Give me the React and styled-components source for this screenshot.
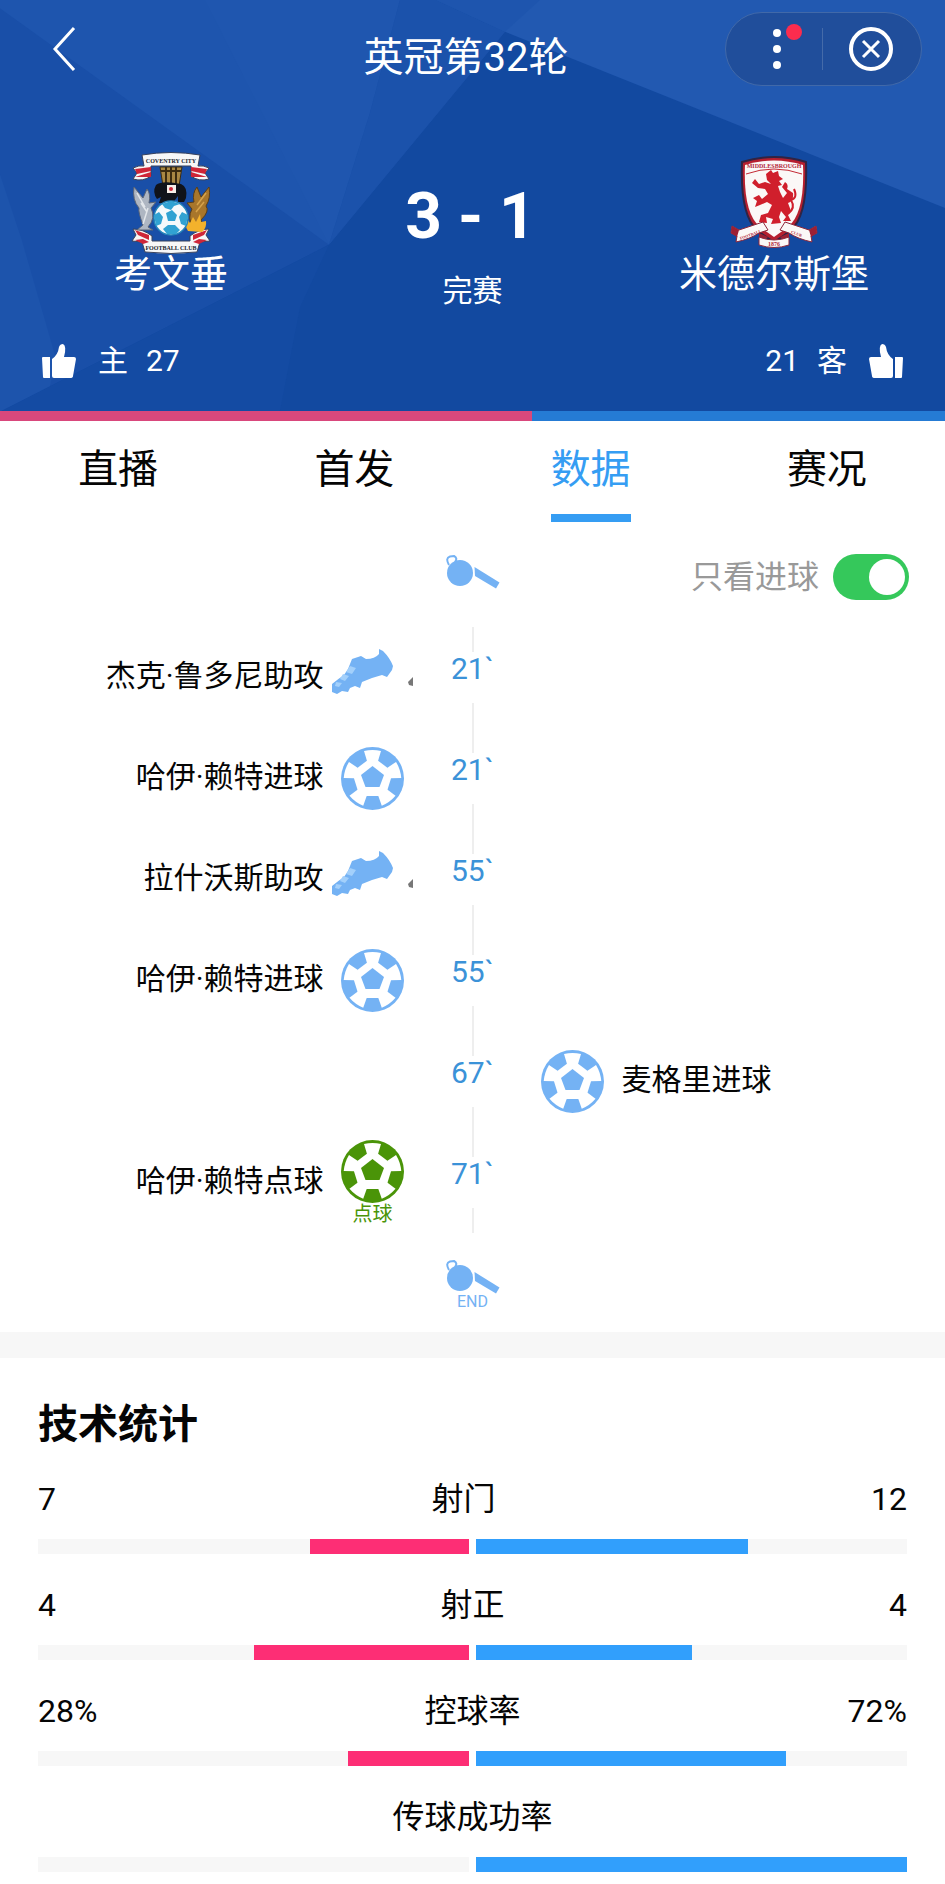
import React, { useState } from 'react';
import styled, { createGlobalStyle, css } from 'styled-components';

const GlobalStyle = createGlobalStyle`
  * {
    box-sizing: border-box;
  }

  body {
    margin: 0;
    background: #ffffff;
    color: #050505;
    font-family: Roboto, 'Noto Sans CJK SC', sans-serif;
  }

  h1, h2, p, ol {
    margin: 0;
    padding: 0;
  }

  button {
    padding: 0;
    border: none;
    background: none;
    color: inherit;
    font-family: inherit;
    cursor: pointer;
  }

  svg {
    display: block;
    flex-shrink: 0;
  }
`;

const Page = styled.div`
  overflow-x: hidden;
  padding-bottom: 12px;
`;

const Header = styled.header`
  position: relative;
  background: #1249a0;
  color: #ffffff;
`;

const HeaderBackground = styled.svg`
  position: absolute;
  top: 0;
  left: 0;
  width: 100%;
  height: 100%;
`;

const HeaderContent = styled.div`
  position: relative;
`;

const TopBar = styled.div`
  display: grid;
  grid-template-columns: 1fr auto 1fr;
  align-items: center;
  padding: 10px 23px 0 42px;
`;

const BackButton = styled.button`
  justify-self: start;
`;

const Title = styled.h1`
  padding: 18px 32px 0 0;
  font-size: 40px;
  line-height: 60px;
  font-weight: 400;
`;

const Capsule = styled.div`
  justify-self: end;
  display: flex;
  align-items: center;
  width: 197px;
  height: 74px;
  padding-right: 2px;
  border: 1px solid #4169a9;
  border-radius: 37px;
  background: #204e9b;
`;

const CapsuleButton = styled.button`
  display: flex;
  flex: 1;
  justify-content: center;
`;

const CapsuleDivider = styled.span`
  width: 1px;
  height: 42px;
  background: #456ba9;
`;

const ScoreBoard = styled.div`
  display: grid;
  grid-template-columns: 264px 1fr 264px;
  padding: 64px 39px 0;
`;

const Team = styled.div`
  display: flex;
  flex-direction: column;
  align-items: center;
`;

const TeamName = styled.p`
  font-size: 38px;
  line-height: 40px;
  white-space: nowrap;
`;

const Result = styled.div`
  display: flex;
  flex-direction: column;
  align-items: center;
  padding-top: 25px;
`;

const Score = styled.p`
  padding-right: 4px;
  font-size: 64px;
  line-height: 80px;
  font-weight: 700;
  white-space: nowrap;
`;

const Status = styled.p`
  padding-top: 14px;
  font-size: 30px;
  line-height: 40px;
`;

const Votes = styled.div`
  display: flex;
  justify-content: space-between;
  padding: 30px 42px;
`;

const VoteButton = styled.button`
  display: flex;
  align-items: center;
  gap: 18px;
  color: #ffffff;
  font-size: 30px;
  line-height: 40px;

  svg {
    margin-${props => (props.$side === 'home' ? 'right' : 'left')}: 4px;
  }
`;

const VoteBar = styled.div`
  position: relative;
  display: flex;
  height: 10px;
`;

const VoteShare = styled.div`
  background: ${props => props.$color};
`;

const Tabs = styled.nav`
  display: grid;
  grid-template-columns: repeat(4, 1fr);
  justify-items: center;
`;

const Tab = styled.button`
  height: 101px;
  padding-top: 4px;
  border-bottom: 8px solid transparent;
  color: #050505;
  font-size: 40px;
  line-height: 60px;

  ${props =>
    props.$active &&
    css`
      border-color: #359df3;
      color: #359df3;
    `};
`;

const TimelineTop = styled.div`
  display: grid;
  grid-template-columns: 1fr 54px 1fr;
  align-items: start;
  padding: 32px 36px 0;
`;

const Filter = styled.label`
  grid-column: 3;
  justify-self: end;
  display: flex;
  align-items: center;
  gap: 14px;
  color: #999999;
  font-size: 32px;
  line-height: 46px;
`;

const Switch = styled.input`
  appearance: none;
  display: flex;
  align-items: center;
  width: 76px;
  height: 46px;
  margin: 0;
  padding: 0 4px;
  border-radius: 23px;
  background: #dddddd;
  cursor: pointer;

  &::before {
    content: '';
    width: 36px;
    height: 36px;
    border-radius: 50%;
    background: #ffffff;
  }

  &:checked {
    justify-content: flex-end;
    background: #35c85b;
  }
`;

const Events = styled.ol`
  list-style: none;
  padding-top: 27px;
`;

const EventRow = styled.li`
  display: grid;
  grid-template-columns: 1fr 118px 1fr;
  height: 101px;
`;

const EventSide = styled.div`
  display: flex;
  align-items: center;
  flex-direction: ${props => (props.$side === 'home' ? 'row-reverse' : 'row')};
  gap: 8px;
  font-size: 30px;
  line-height: 40px;
  white-space: nowrap;
`;

const EventText = styled.span`
  padding-bottom: 4px;
`;

const EventIcon = styled.div`
  display: flex;
  flex-direction: column;
  align-items: center;
  width: 82px;
`;

const PenaltyLabel = styled.span`
  color: #4a9408;
  font-size: 20px;
  line-height: 22px;
`;

const EventTime = styled.div`
  display: flex;
  flex-direction: column;
  align-items: center;
  justify-content: space-between;
  color: #3b92d8;
  font-size: 30px;
  line-height: 34px;

  &::before,
  &::after {
    content: '';
    width: 2px;
    height: 25px;
    background: #eeeeee;
  }

  time {
    height: 51px;
  }
`;

const FinalWhistle = styled.div`
  display: flex;
  flex-direction: column;
  align-items: center;
  padding: 26px 0 23px;
  color: #74b2f4;
  font-size: 16px;
  line-height: 14px;
`;

const Stats = styled.section`
  padding: 42px 38px 0;
  border-top: 26px solid #f7f7f7;
`;

const StatsTitle = styled.h2`
  padding-bottom: 29px;
  font-size: 40px;
  line-height: 50px;
  font-weight: 700;
`;

const StatRow = styled.div`
  & + & {
    margin-top: 31px;
  }
`;

const StatText = styled.div`
  display: flex;
  justify-content: space-between;
  height: 40px;
  font-size: 32px;
  line-height: 40px;
`;

const StatBars = styled.div`
  display: grid;
  grid-template-columns: 1fr 1fr;
  gap: 7px;
  padding-top: 20px;
`;

const StatTrack = styled.div`
  display: flex;
  justify-content: ${props => (props.$side === 'home' ? 'flex-end' : 'flex-start')};
  height: 15px;
  background: #f7f7f7;
`;

const StatFill = styled.div`
  background: ${props => (props.$side === 'home' ? '#fd2e75' : '#319ffc')};
`;

const Facets = () => (
  <HeaderBackground viewBox="0 0 945 411" preserveAspectRatio="none" aria-hidden="true">
    <path fill="#194fa8" d="M0 0H540L505 31L329 239L0 402Z" />
    <path fill="#1e55ae" d="M0 0H400L370 110L329 239L0 8Z" />
    <path fill="#2057b0" d="M205 0H400L370 110L329 239L262 110Z" opacity=".5" />
    <path fill="#1b52ab" d="M400 0H436L505 31L329 239L370 110Z" />
    <path fill="#1d54ac" d="M0 170L22 235L56 350L50 377L0 402Z" />
    <path fill="#144ba3" d="M329 239L0 402V411H278L300 300Z" />
    <path fill="#2259b1" d="M436 0H945V203L505 31Z" />
    <path fill="#1d54ad" d="M436 0H540L505 31Z" opacity=".7" />
  </HeaderBackground>
);

const CoventryCrest = () => (
  <svg width="80" height="102" viewBox="0 1 80 102" role="img" aria-label="Coventry City">
    <g fill="#f7f7f7" stroke="#39425c" strokeWidth="1">
      <path d="M11 4Q40-1 69 4L67 15Q72 14 78 17L74 22L78 28Q68 31 60 25V15H20V25Q12 31 2 28L6 22L2 17Q8 14 13 15Z" />
      <path d="M2 78Q12 78 21 85V90H59V85Q68 78 78 78L75 84L79 90L69 91L66 101Q40 104 14 101L11 91L1 90L5 84Z" />
    </g>
    <g fill="#cf2638">
      <path d="M4 18L20 16V20L6 23ZM4 26L20 21V26ZM76 18L60 16V20L74 23ZM76 26L60 21V26Z" />
      <path d="M4 79L18 84V89L7 84ZM4 89L12 88L18 91L12 93ZM76 79L62 84V89L73 84ZM76 89L68 88L62 91L68 93Z" />
    </g>
    <path fill="#a98743" stroke="#3d2c10" d="M29 16H51L48 35H32Z" />
    <path stroke="#3d2c10" strokeWidth="2" d="M35 16V34M40 16V34M45 16V34M30 20H50" />
    <path fill="#10131a" d="M25 34Q31 29 50 33Q57 36 55 47L53 51H47V45L44 49L41 56L37 50L33 52H28L30 46L26 48Q21 41 25 34Z" />
    <rect x="36" y="34" width="9" height="8" fill="#f6efe9" />
    <circle cx="40" cy="38" r="2" fill="#cf2638" />
    <path fill="#aeb6c2" stroke="#5b6577" d="M3 36L12 47L16 38Q20 43 18 52L25 51L20 57Q25 67 17 76L22 79H6L12 74Q7 61 8 57Q1 49 3 36Z" />
    <path stroke="#e2e6ea" strokeWidth="1.5" fill="none" d="M6 42L14 56M10 52L16 61M17 57L12 73" />
    <path fill="#a8762b" stroke="#5a3e17" d="M78 36L70 46L66 36Q61 42 63 51L56 52L61 58Q56 67 62 76H73L70 69Q79 60 75 55Q80 47 78 36Z" />
    <path stroke="#d6a34b" strokeWidth="1.5" fill="none" d="M75 42L66 54M73 51L65 61" />
    <path fill="#f3b22c" d="M57 80Q53 75 57 69L59 72L62 66L65 71L69 63L70 71L75 70Q76 77 71 81Z" />
    <circle cx="40" cy="67" r="17" fill="#f5f9fb" stroke="#2384ba" strokeWidth="1.5" />
    <path fill="#31a2d2" d="M35 62L41 59L46 64L44 70L37 70ZM31 53L40 50L49 53L43 55L40 59L34 57ZM23 64L28 61L32 66L30 73L25 75ZM57 64L51 61L48 66L50 73L55 75ZM32 78L37 74H44L49 79L45 83H36Z" />
    <text x="40" y="12" textAnchor="middle" fontFamily="Liberation Serif, serif" fontWeight="700" fontSize="6" fill="#20242d">COVENTRY CITY</text>
    <text x="40" y="99" textAnchor="middle" fontFamily="Liberation Serif, serif" fontWeight="700" fontSize="6" fill="#20242d">FOOTBALL CLUB</text>
  </svg>
);

const MiddlesbroughCrest = () => (
  <svg width="88" height="102" viewBox="0 -3 88 102" role="img" aria-label="Middlesbrough">
    <path fill="#b61f2f" stroke="#302444" strokeWidth="2" d="M12 7Q44-3 76 7Q78 60 61 75Q54 81 44 87Q34 81 27 75Q10 60 12 7Z" />
    <path fill="#fbf8f7" d="M15 10Q44 1 73 10Q75 58 58 72L44 82L30 72Q13 58 15 10Z" />
    <path fill="none" stroke="#c42a35" d="M16 19Q44 9 72 19" />
    <path fill="#d01f2c" transform="translate(-1 -4)" d="M37 23L42 19L44 22L49 20L50 25L54 28L50 30L53 34L49 35L51 41L54 47L58 42L53 36L56 31Q60 33 58 38L64 42Q65 50 59 52L62 60L59 64L62 70L54 70L57 66L52 60L50 66L52 72L42 73L44 68L37 66L38 72L30 71L32 64L39 62L43 54L38 51L31 54L26 56L28 50L24 47L30 44L33 48L39 43L36 38L29 37L23 32L26 28L30 33L36 31L42 33L38 29Z" />
    <path fill="none" stroke="#d01f2c" strokeWidth="2" d="M58 59Q66 53 61 45Q68 43 64 34" />
    <path fill="#fbf8f7" stroke="#8d263a" d="M2 71L9 75L33 67L38 75L29 78Q20 84 6 87L7 81L1 78ZM86 71L79 75L55 67L50 75L59 78Q68 84 82 87L81 81L87 78Z" />
    <path fill="#9c2034" d="M2 71L9 75L7 82L1 78ZM86 71L79 75L81 82L87 78ZM29 78L38 82L34 86L29 84ZM59 78L50 82L54 86L59 84Z" />
    <path fill="#fbf8f7" stroke="#8d263a" d="M29 82Q44 88 59 82V90Q44 95 29 90Z" />
    <g fontFamily="Liberation Serif, serif" fontWeight="700" fill="#b3283a" textAnchor="middle">
      <text x="44" y="13" fontSize="6">MIDDLESBROUGH</text>
      <text x="44" y="91" fontSize="6">1876</text>
      <text x="21" y="81" fontSize="4" transform="rotate(-20 21 81)">FOOTBALL</text>
      <text x="66" y="80" fontSize="4" transform="rotate(20 66 80)">CLUB</text>
    </g>
  </svg>
);

const ThumbIcon = ({ flipped }) => (
  <svg width="34" height="34" viewBox="0 0 34 34" fill="#ffffff" aria-hidden="true">
    <g transform={flipped ? 'translate(34 0) scale(-1 1)' : undefined}>
      <path d="M1 13H8V34H2Q1 34 1 33L0 14Q0 13 1 13Z" />
      <path d="M10 15Q16 11 17 3Q18 0 21 0Q25 2 22 13H32Q34 13 34 15L31 32Q31 34 28 34H12Q10 34 10 32Z" />
    </g>
  </svg>
);

const WhistleIcon = () => (
  <svg width="54" height="36" viewBox="0 -2 54 36" aria-hidden="true">
    <circle cx="14" cy="17" r="13" fill="#74b2f4" />
    <path d="M3 9Q-1 2 4 0.5L8 0Q12 2 9 6" fill="none" stroke="#74b2f4" strokeWidth="2" />
    <path d="M28.500 11L53.500 26.500L50 32.500L29 20Z" fill="#74b2f4" />
  </svg>
);

const BootIcon = () => (
  <svg width="82" height="58" viewBox="0 1 82 58" aria-hidden="true">
    <path fill="#74b2f4" d="M0 36Q6 31 12 27L16 21L20 11L29 8L34 11Q43 11 47 6V1L51 3Q58 10 61 18L60 22L55 29L50 27L40 30L30 34L28 40L23 38L18 40L16 44L10 43L5 46L0 44Z" />
    <path fill="#a3d0fb" d="M18 18L24 20L20 26L14 24ZM11 26L17 28L13 33L8 31ZM4 34L10 35L7 39L3 38Z" />
    <path fill="#777777" d="M81 29V38L77 37L76 34Z" />
  </svg>
);

// five white stubs around the centre pentagon, joined by its outline
const BallIcon = ({ color = '#74b2f4' }) => (
  <svg width="63" height="63" viewBox="0 0 63 63" aria-hidden="true">
    <circle cx="31.500" cy="31.500" r="31.500" fill={color} />
    <path fill="#ffffff" d="M31.500 9.500L52 25L44.500 49H18.500L11 25Z" />
    <g fill="#ffffff">
      {[0, 72, 144, 216, 288].map(angle => (
        <path
          key={angle}
          transform={`rotate(${angle} 31.500 31.500)`}
          d="M23 4Q31.500 2 40 4L37 14H26Z"
        />
      ))}
    </g>
    <path fill={color} d="M31.500 19L43 28L38.500 40H24.500L20 28Z" />
  </svg>
);

const events = [
  { time: '21`', side: 'home', type: 'assist', text: '杰克·鲁多尼助攻' },
  { time: '21`', side: 'home', type: 'goal', text: '哈伊·赖特进球' },
  { time: '55`', side: 'home', type: 'assist', text: '拉什沃斯助攻' },
  { time: '55`', side: 'home', type: 'goal', text: '哈伊·赖特进球' },
  { time: '67`', side: 'away', type: 'goal', text: '麦格里进球' },
  { time: '71`', side: 'home', type: 'penalty', text: '哈伊·赖特点球' },
];

const stats = [
  { name: '射门', home: '7', away: '12', homeShare: 7 / 19, awayShare: 12 / 19 },
  { name: '射正', home: '4', away: '4', homeShare: 0.5, awayShare: 0.5 },
  { name: '控球率', home: '28%', away: '72%', homeShare: 0.28, awayShare: 0.72 },
  { name: '传球成功率', home: '', away: '', homeShare: 0, awayShare: 1 },
];

const tabs = ['直播', '首发', '数据', '赛况'];

const homeVotes = 27;
const awayVotes = 21;

const MatchEvent = ({ event }) => (
  <EventSide $side={event.side}>
    <EventIcon>
      {event.type === 'assist' && <BootIcon />}
      {event.type === 'goal' && <BallIcon />}
      {event.type === 'penalty' && (
        <>
          <BallIcon color="#4a9408" />
          <PenaltyLabel>点球</PenaltyLabel>
        </>
      )}
    </EventIcon>
    <EventText>{event.text}</EventText>
  </EventSide>
);

const App = () => {
  const [activeTab, setActiveTab] = useState('数据');
  const [goalsOnly, setGoalsOnly] = useState(true);

  return (
    <Page>
      <GlobalStyle />
      <Header>
        <Facets />
        <HeaderContent>
          <TopBar>
            <BackButton aria-label="返回">
              <svg width="44" height="44" viewBox="0 0 44 44" fill="none" stroke="#ffffff" strokeWidth="3">
                <path d="M32 1L13 22L32 43" />
              </svg>
            </BackButton>
            <Title>英冠第32轮</Title>
            <Capsule>
              <CapsuleButton aria-label="更多">
                <svg width="56" height="50" viewBox="0 0 56 50" fill="#ffffff">
                  <circle cx="31" cy="9" r="4" />
                  <circle cx="31" cy="25" r="4" />
                  <circle cx="31" cy="41" r="4" />
                  <circle cx="48" cy="8" r="8" fill="#fb2c4e" />
                </svg>
              </CapsuleButton>
              <CapsuleDivider />
              <CapsuleButton aria-label="关闭">
                <svg width="46" height="46" viewBox="0 0 46 46" fill="none" stroke="#ffffff">
                  <circle cx="23" cy="23" r="20" strokeWidth="4" />
                  <path d="M15 15L31 31M31 15L15 31" strokeWidth="3" />
                </svg>
              </CapsuleButton>
            </Capsule>
          </TopBar>
          <ScoreBoard>
            <Team>
              <CoventryCrest />
              <TeamName>考文垂</TeamName>
            </Team>
            <Result>
              <Score>3 - 1</Score>
              <Status>完赛</Status>
            </Result>
            <Team>
              <MiddlesbroughCrest />
              <TeamName>米德尔斯堡</TeamName>
            </Team>
          </ScoreBoard>
          <Votes>
            <VoteButton $side="home">
              <ThumbIcon />
              <span>主</span>
              <span>{homeVotes}</span>
            </VoteButton>
            <VoteButton $side="away">
              <span>{awayVotes}</span>
              <span>客</span>
              <ThumbIcon flipped />
            </VoteButton>
          </Votes>
        </HeaderContent>
        <VoteBar>
          <VoteShare $color="#d9487c" style={{ flexGrow: homeVotes }} />
          <VoteShare $color="#257bd4" style={{ flexGrow: awayVotes }} />
        </VoteBar>
      </Header>

      <Tabs>
        {tabs.map(tab => (
          <Tab key={tab} $active={tab === activeTab} onClick={() => setActiveTab(tab)}>
            {tab}
          </Tab>
        ))}
      </Tabs>

      <section>
        <TimelineTop>
          <span />
          <WhistleIcon />
          <Filter>
            只看进球
            <Switch
              type="checkbox"
              role="switch"
              checked={goalsOnly}
              onChange={e => setGoalsOnly(e.target.checked)}
            />
          </Filter>
        </TimelineTop>
        <Events>
          {events.map((event, index) => (
            <EventRow key={index}>
              {event.side === 'home' ? <MatchEvent event={event} /> : <span />}
              <EventTime>
                <time>{event.time}</time>
              </EventTime>
              {event.side === 'away' && <MatchEvent event={event} />}
            </EventRow>
          ))}
        </Events>
        <FinalWhistle>
          <WhistleIcon />
          <span>END</span>
        </FinalWhistle>
      </section>

      <Stats>
        <StatsTitle>技术统计</StatsTitle>
        {stats.map(stat => (
          <StatRow key={stat.name}>
            <StatText>
              <span>{stat.home}</span>
              <span>{stat.name}</span>
              <span>{stat.away}</span>
            </StatText>
            <StatBars>
              <StatTrack $side="home">
                <StatFill $side="home" style={{ width: `${stat.homeShare * 100}%` }} />
              </StatTrack>
              <StatTrack $side="away">
                <StatFill $side="away" style={{ width: `${stat.awayShare * 100}%` }} />
              </StatTrack>
            </StatBars>
          </StatRow>
        ))}
      </Stats>
    </Page>
  );
};

export default App;
